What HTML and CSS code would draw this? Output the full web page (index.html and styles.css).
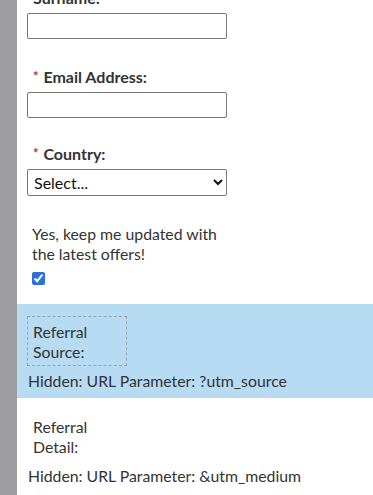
FILE: index.html
```html
<!DOCTYPE html>
<html>
<head>
<meta charset="utf-8">
<link rel="stylesheet" href="styles.css">
</head>
<body>
<div class="page">
  <div class="rail"></div>
  <div class="form">
    <div class="field first">
      <label class="label">Surname:</label>
      <input class="text-input" type="text">
    </div>
    <div class="field second">
      <label class="label"><span class="req">*</span> Email Address:</label>
      <input class="text-input" type="text">
    </div>
    <div class="field">
      <label class="label"><span class="req">*</span> Country:</label>
      <select class="select"><option>Select...</option></select>
    </div>
    <div class="optin">
      <p class="optin-text">Yes, keep me updated with the latest offers!</p>
      <input class="check" type="checkbox" checked>
    </div>
    <div class="hidden-field selected">
      <div class="hidden-label">Referral Source:</div>
      <div class="hidden-note">Hidden: URL Parameter: ?utm_source</div>
    </div>
    <div class="hidden-field next">
      <div class="hidden-label plain">Referral Detail:</div>
      <div class="hidden-note">Hidden: URL Parameter: &amp;utm_medium</div>
    </div>
  </div>
</div>
</body>
</html>
```
FILE: styles.css
```css
html, body {
  margin: 0;
  padding: 0;
  background: #ffffff;
  overflow: hidden;
}
body {
  font-family: Lato, "Open Sans", sans-serif;
  color: #333333;
}
.page {
  display: flex;
  min-height: 495px;
}
.rail {
  width: 17px;
  flex: 0 0 17px;
  background: #9d9da1;
}
.form {
  flex: 1;
  margin-top: -12px;
}
.field {
  padding: 0 10px;
  margin-top: 26px;
}
.field.first {
  margin-top: 0;
}
.field.second {
  margin-top: 28px;
}
.label {
  display: block;
  height: 20px;
  font-size: 16px;
  line-height: 20px;
  font-weight: 700;
  color: #333333;
  padding-left: 6px;
  margin-bottom: 5px;
}
.req {
  color: #c0272d;
  font-size: 13px;
  line-height: 0;
  vertical-align: 2px;
  margin-right: 1px;
}
.text-input {
  display: block;
  box-sizing: border-box;
  width: 200px;
  height: 26px;
  border: 1px solid #767676;
  border-radius: 2px;
  margin: 0;
  padding: 2px 4px;
  background: #fff;
}
.select {
  display: block;
  box-sizing: border-box;
  width: 200px;
  height: 27px;
  margin: 0;
  border: 1px solid #767676;
  border-radius: 2px;
  background: #fff;
  font-family: Lato, sans-serif;
  font-size: 16px;
  color: #111;
  padding: 0 2px;
}
.optin {
  padding: 0 10px 0 15px;
  margin-top: 28px;
}
.optin-text {
  margin: 0;
  width: 200px;
  font-size: 15.8px;
  line-height: 20px;
  color: #333;
}
.check {
  display: block;
  width: 13px;
  height: 13px;
  margin: 8px 0 0 0;
  accent-color: #2f6fdc;
}
.hidden-field {
  padding: 12px 10px 7px 10px;
}
.hidden-field.selected {
  margin-top: 19px;
  background: #b7dbf3;
}
.hidden-field.next {
  padding-top: 13px;
}
.hidden-label {
  box-sizing: border-box;
  width: 100px;
  height: 50px;
  border: 1px dashed #9aa3aa;
  padding: 5px 5px 0 5px;
  font-size: 15.8px;
  line-height: 20px;
  color: #333;
}
.hidden-label.plain {
  border-color: transparent;
}
.hidden-note {
  margin-top: 5px;
  font-size: 15.8px;
  line-height: 20px;
  color: #333;
  padding-left: 1px;
}
```
